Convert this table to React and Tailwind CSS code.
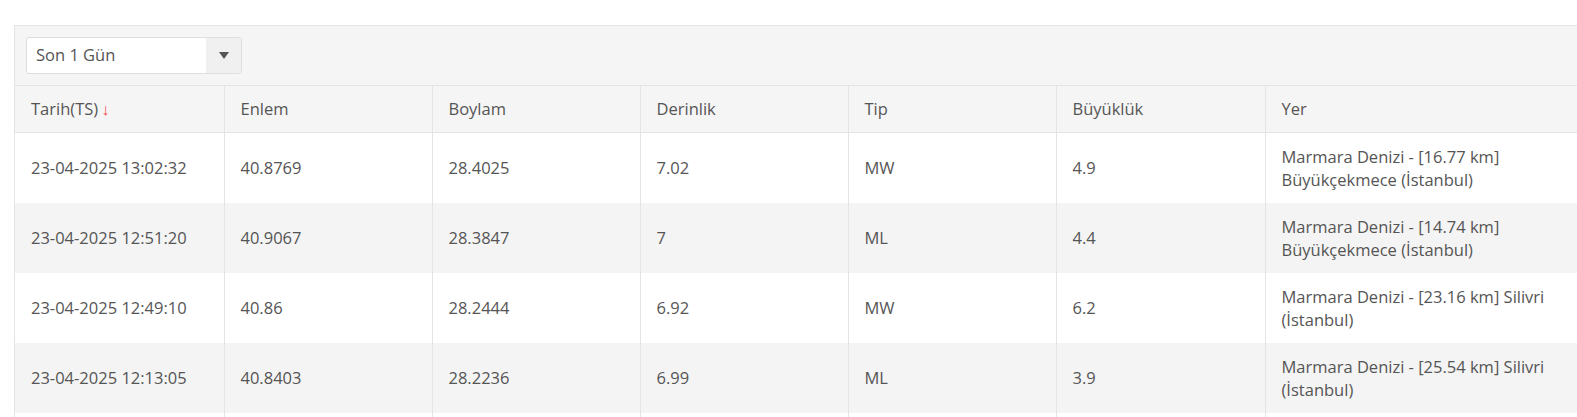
import React from "react";

const rows = [
  ["23-04-2025 13:02:32", "40.8769", "28.4025", "7.02", "MW", "4.9", "Marmara Denizi - [16.77 km] Büyükçekmece (İstanbul)"],
  ["23-04-2025 12:51:20", "40.9067", "28.3847", "7", "ML", "4.4", "Marmara Denizi - [14.74 km] Büyükçekmece (İstanbul)"],
  ["23-04-2025 12:49:10", "40.86", "28.2444", "6.92", "MW", "6.2", "Marmara Denizi - [23.16 km] Silivri (İstanbul)"],
  ["23-04-2025 12:13:05", "40.8403", "28.2236", "6.99", "ML", "3.9", "Marmara Denizi - [25.54 km] Silivri (İstanbul)"],
];

const headers = ["Tarih(TS)", "Enlem", "Boylam", "Derinlik", "Tip", "Büyüklük", "Yer"];

export default function App() {
  return (
    <div
      className="w-full h-[417px] overflow-hidden bg-white pl-[14px] pt-[25px] text-[#555]"
      style={{ fontFamily: '"Open Sans", sans-serif' }}
    >
      <div className="w-[1600px] border border-[#e4e4e4] bg-[#f5f5f5]">
        {/* FILTER */}
        <div className="px-[11px] py-[11px]">
          <div className="flex h-[37px] w-[216px] rounded-[3px] border border-[#dedede] bg-white">
            <div className="flex flex-1 items-center pl-[9px] text-[16.5px] text-[#555]">Son 1 Gün</div>
            <div className="flex w-[35px] items-center justify-center rounded-r-[3px] bg-[#f0f0f0]">
              <svg width="10" height="7" viewBox="0 0 10 7">
                <path d="M0 0H10L5 7Z" fill="#555" />
              </svg>
            </div>
          </div>
        </div>

        {/* TABLE */}
        <table className="border-collapse table-fixed text-[16.5px]">
          <colgroup>
            <col className="w-[209px]" />
            <col className="w-[208px]" />
            <col className="w-[208px]" />
            <col className="w-[208px]" />
            <col className="w-[208px]" />
            <col className="w-[209px]" />
            <col className="w-[330px]" />
          </colgroup>
          <thead>
            <tr className="h-[47px] bg-[#f5f5f5]">
              {headers.map((h, i) => (
                <th
                  key={h}
                  className={`border-t border-b border-[#e4e4e4] px-4 text-left font-normal ${i > 0 ? "border-l" : ""}`}
                >
                  {h}
                  {i === 0 && <span className="ml-[3px] text-[#f04f4f]">↓</span>}
                </th>
              ))}
            </tr>
          </thead>
          <tbody>
            {rows.map((r, idx) => (
              <tr key={idx} className={`h-[70px] ${idx % 2 ? "bg-[#f4f4f4]" : "bg-white"}`}>
                {r.map((c, i) => (
                  <td
                    key={i}
                    className={`px-4 leading-[23px] align-middle ${i > 0 ? "border-l border-[#e4e4e4]" : ""}`}
                  >
                    {c}
                  </td>
                ))}
              </tr>
            ))}
            <tr className="h-[70px] bg-white">
              {headers.map((h, i) => (
                <td key={h} className={i > 0 ? "border-l border-[#e4e4e4]" : ""} />
              ))}
            </tr>
          </tbody>
        </table>
      </div>
    </div>
  );
}
